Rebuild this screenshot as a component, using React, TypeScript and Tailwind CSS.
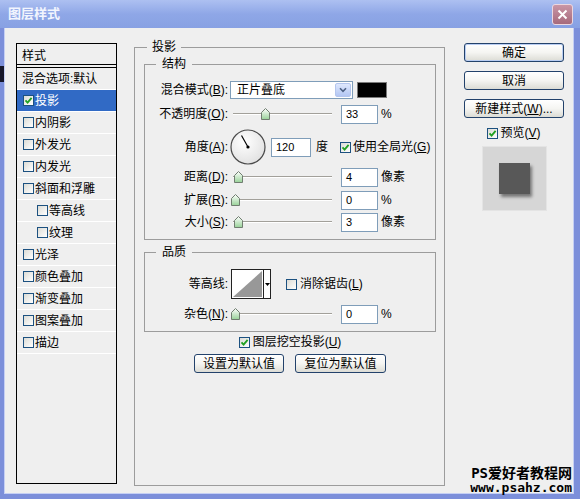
import type { ReactNode } from 'react'

const FONT = "font-['Liberation_Sans','Noto_Sans_CJK_SC',sans-serif]"

const STYLES = [
  { name: '投影', checked: true, active: true },
  { name: '内阴影' },
  { name: '外发光' },
  { name: '内发光' },
  { name: '斜面和浮雕' },
  { name: '等高线', sub: true },
  { name: '纹理', sub: true },
  { name: '光泽' },
  { name: '颜色叠加' },
  { name: '渐变叠加' },
  { name: '图案叠加' },
  { name: '描边' },
] as { name: string; checked?: boolean; active?: boolean; sub?: boolean }[]

// label with underlined access key, e.g. 混合模式(B):
function Mn({ label, k, colon = true }: { label: string; k: string; colon?: boolean }) {
  return (
    <span className="whitespace-nowrap">
      {label}(<span className="underline">{k}</span>){colon ? ':' : ''}
    </span>
  )
}

function Check({ checked = false }: { checked?: boolean }) {
  return (
    <span className="inline-flex w-[11px] h-[11px] shrink-0 items-center justify-center border border-[#1c5180] bg-gradient-to-br from-[#dcdcd6] to-white">
      {checked && (
        <svg width="9" height="9" viewBox="0 0 9 9">
          <path d="M1.5 4.3 L3.6 6.6 L7.6 1.8" fill="none" stroke="#21a121" strokeWidth="1.8" />
        </svg>
      )}
    </span>
  )
}

function Slider({ at }: { at: number }) {
  return (
    <div className="relative w-[102px] h-[12px] shrink-0">
      <div className="absolute left-[3px] right-0 top-[5px] h-[2px] border-t border-[#a2a09a] bg-white" />
      <svg className="absolute top-0" style={{ left: at - 4.5 }} width="9" height="12" viewBox="0 0 9 12">
        <defs>
          <linearGradient id="thumb" x1="0" y1="0" x2="0" y2="1">
            <stop offset="0" stopColor="#ffffff" />
            <stop offset="1" stopColor="#98d298" />
          </linearGradient>
        </defs>
        <path d="M0.5 4.5 L4.5 0.5 L8.5 4.5 L8.5 11.5 L0.5 11.5 Z" fill="url(#thumb)" stroke="#707d70" />
      </svg>
    </div>
  )
}

function Field({ value, className = 'w-[37px]' }: { value: string; className?: string }) {
  return (
    <div className={`h-[19px] shrink-0 flex items-center pl-[4px] border border-[#7f9db9] bg-white text-[11px] ${className}`}>
      {value}
    </div>
  )
}

function Btn({ children, className = '' }: { children: ReactNode; className?: string }) {
  return (
    <div
      className={`h-[19px] flex items-center justify-center rounded-[3px] border border-[#23426b] bg-gradient-to-b from-white via-[#f5f5f2] to-[#dcdcd5] whitespace-nowrap ${className}`}
    >
      {children}
    </div>
  )
}

function Row({ label, className = '', children }: { label: ReactNode; className?: string; children: ReactNode }) {
  return (
    <div className={`flex items-center ${className}`}>
      <div className="w-[83px] shrink-0 text-right">{label}</div>
      {children}
    </div>
  )
}

function SliderRow({ label, k, at, value, unit, className }: { label: string; k: string; at: number; value: string; unit: string; className: string }) {
  return (
    <Row label={<Mn label={label} k={k} />} className={`h-[20px] ${className}`}>
      <div className="ml-[2px]">
        <Slider at={at} />
      </div>
      <div className="ml-[9px]">
        <Field value={value} />
      </div>
      <span className="ml-[3px]">{unit}</span>
    </Row>
  )
}

function StyleList() {
  return (
    <div className="w-[101px] h-[441px] shrink-0 border border-black flex flex-col bg-[#efefef]">
      <div className="h-[20px] flex items-center pl-[5px] pt-[3px]">样式</div>
      <div className="h-[4px] border-y border-black" />
      <div className="h-[22px] flex items-center pl-[5px] border-b border-white whitespace-nowrap">混合选项:默认</div>
      {STYLES.map(s => (
        <div
          key={s.name}
          className={`h-[22px] flex items-center border-b border-white whitespace-nowrap ${s.sub ? 'pl-[20px]' : 'pl-[6px]'} ${
            s.active ? 'bg-[#316ac5] text-white' : ''
          }`}
        >
          <Check checked={s.checked} />
          <span className="ml-[1px]">{s.name}</span>
        </div>
      ))}
    </div>
  )
}

function Dial() {
  return (
    <svg width="36" height="36" viewBox="0 0 36 36">
      <defs>
        <radialGradient id="dial" cx="0.4" cy="0.35" r="0.75">
          <stop offset="0" stopColor="#ffffff" />
          <stop offset="1" stopColor="#dedede" />
        </radialGradient>
      </defs>
      <circle cx="18" cy="18" r="17" fill="url(#dial)" stroke="#4a4a4a" strokeWidth="1.2" />
      <line x1="18" y1="18" x2="11.5" y2="6.5" stroke="#000" strokeWidth="1.2" />
      <circle cx="18" cy="18" r="1.6" fill="#000" />
    </svg>
  )
}

function DropShadowPanel() {
  return (
    <fieldset className="ml-[17px] -mt-[4px] w-[311px] h-[447px] shrink-0 border border-[#9c9c9c] p-0 m-0">
      <legend className="ml-[12px] px-[5px] leading-[16px]">投影</legend>
      <div className="pl-[9px] pr-[8px]">
        {/* 结构 */}
        <fieldset className="mt-[1px] border border-[#9c9c9c] p-0 m-0">
          <legend className="ml-[11px] px-[6px] leading-[16px]">结构</legend>
          <div className="pb-[7px]">
            <Row label={<Mn label="混合模式" k="B" />} className="mt-[8px] h-[19px]">
              <div className="ml-[2px] w-[123px] h-[18px] flex items-center border border-[#7f9db9] bg-white">
                <span className="flex-1 pl-[6px]">正片叠底</span>
                <div className="w-[16px] h-[14px] mr-[1px] rounded-[2px] border border-[#b4c6ee] bg-gradient-to-b from-[#dfe8fd] to-[#b3c6f3] flex items-center justify-center">
                  <svg width="8" height="6" viewBox="0 0 8 6">
                    <path d="M1 1.3 L4 4.3 L7 1.3" fill="none" stroke="#4d6185" strokeWidth="1.6" />
                  </svg>
                </div>
              </div>
              <div className="ml-[4px] w-[30px] h-[16px] bg-black border border-[#7a7a7a]" />
            </Row>
            <SliderRow label="不透明度" k="O" at={35} value="33" unit="%" className="mt-[5px]" />
            <Row label={<Mn label="角度" k="A" />} className="mt-[4px] h-[38px]">
              <div className="ml-[2px] flex">
                <Dial />
              </div>
              <div className="ml-[5px]">
                <Field value="120" className="w-[40px]" />
              </div>
              <span className="ml-[5px]">度</span>
              <div className="ml-[12px] flex items-center">
                <Check checked />
                <span className="ml-[2px]">
                  <Mn label="使用全局光" k="G" colon={false} />
                </span>
              </div>
            </Row>
            <SliderRow label="距离" k="D" at={8} value="4" unit="像素" className="mt-[1px]" />
            <SliderRow label="扩展" k="R" at={5} value="0" unit="%" className="mt-[3px]" />
            <SliderRow label="大小" k="S" at={8} value="3" unit="像素" className="mt-[2px]" />
          </div>
        </fieldset>

        {/* 品质 */}
        <fieldset className="mt-[4px] border border-[#9c9c9c] p-0 m-0">
          <legend className="ml-[11px] px-[6px] leading-[16px]">品质</legend>
          <div className="pb-[7px]">
            <Row label="等高线:" className="mt-[9px] h-[30px]">
              <div className="ml-[3px] flex w-[40px] h-[30px] border border-[#222] bg-white">
                <svg width="31" height="28" viewBox="0 0 31 28">
                  <path d="M1 27 L30 1 L30 27 Z" fill="#989898" />
                </svg>
                <div className="flex-1 border-l border-[#222] flex items-center justify-center">
                  <svg width="5" height="3" viewBox="0 0 5 3">
                    <path d="M0 0 L5 0 L2.5 3 Z" fill="#000" />
                  </svg>
                </div>
              </div>
              <div className="ml-[15px] flex items-center">
                <Check />
                <span className="ml-[3px]">
                  <Mn label="消除锯齿" k="L" colon={false} />
                </span>
              </div>
            </Row>
            <SliderRow label="杂色" k="N" at={5} value="0" unit="%" className="mt-[5px]" />
          </div>
        </fieldset>

        <div className="h-[20px] flex items-center justify-center">
          <Check checked />
          <span className="ml-[3px]">
            <Mn label="图层挖空投影" k="U" colon={false} />
          </span>
        </div>
        <div className="mt-[2px] flex justify-center gap-[11px]">
          <Btn className="w-[90px]">设置为默认值</Btn>
          <Btn className="w-[91px]">复位为默认值</Btn>
        </div>
      </div>
    </fieldset>
  )
}

function SideButtons() {
  return (
    <div className="ml-[19px] w-[100px] shrink-0 flex flex-col items-center">
      <Btn className="w-full shadow-[inset_0_0_0_1px_#b9cdf2]">确定</Btn>
      <Btn className="w-full mt-[9px]">取消</Btn>
      <Btn className="w-full mt-[9px]">
        <span>
          新建样式(<span className="underline">W</span>)...
        </span>
      </Btn>
      <div className="mt-[8px] h-[14px] flex items-center">
        <Check checked />
        <span className="ml-[2px]">
          <Mn label="预览" k="V" colon={false} />
        </span>
      </div>
      <div className="mt-[6px] w-[65px] h-[65px] flex items-center justify-center bg-[#d6d6d6] border border-[#e4e4e4]">
        <div className="w-[31px] h-[31px] bg-[#585858] shadow-[2px_3px_3px_rgba(0,0,0,0.45)]" />
      </div>
    </div>
  )
}

export default function App() {
  return (
    <div className={`relative w-[580px] h-[499px] overflow-hidden flex flex-col bg-[#7c8fda] text-[12px] leading-[16px] text-black ${FONT}`}>
      {/* title bar */}
      <div className="h-[28px] shrink-0 flex items-center justify-between pl-[8px] pr-[7px] bg-gradient-to-b from-[#adc0f1] via-[#8fa7e7] to-[#88a1e3]">
        <span className="text-[13px] font-bold text-[#f2f5fe]">图层样式</span>
        <div className="w-[21px] h-[21px] rounded-[3px] border border-[#ecd7df] bg-gradient-to-b from-[#c996a6] to-[#a66a7c] flex items-center justify-center">
          <svg width="11" height="11" viewBox="0 0 11 11">
            <path d="M1.5 1.5 L9.5 9.5 M9.5 1.5 L1.5 9.5" stroke="#fff" strokeWidth="2" />
          </svg>
        </div>
      </div>

      {/* dialog body */}
      <div className="flex-1 ml-[4px] mr-[6px] mb-[5px] flex items-start pl-[11px] pt-[15px] bg-[#efefef] border-l border-r border-b border-[#c5cff4]">
        <StyleList />
        <DropShadowPanel />
        <SideButtons />
      </div>

      {/* screenshot artifact at the left edge */}
      <div className="absolute left-0 top-[66px] w-[4px] h-[16px] bg-[#17172a]" />

      {/* watermark */}
      <div className="absolute right-[8px] top-[465px] text-right font-bold font-['DejaVu_Sans_Mono','Noto_Sans_CJK_SC',monospace]">
        <div className="text-[14px] leading-[16px]">PS爱好者教程网</div>
        <div className="text-[13px] leading-[14px]">www.psahz.com</div>
      </div>
    </div>
  )
}
